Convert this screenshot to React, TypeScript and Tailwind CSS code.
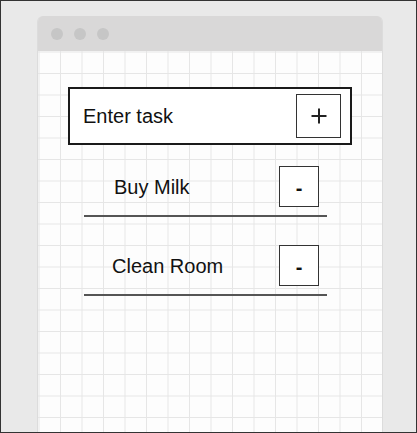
import React from "react";

const font = { fontFamily: '"Liberation Sans", Arial, sans-serif' };

function MinusButton() {
  return (
    <div className="w-[40px] h-[41px] border-[1.5px] border-[#333] bg-white flex items-center justify-center text-[20px] leading-none text-[#111]">
      <span className="mt-[2px] font-bold">-</span>
    </div>
  );
}

function TaskItem({ label, indent }: { label: string; indent: string }) {
  return (
    <div className="flex items-center justify-between pb-[8px] border-b-2 border-[#555] pr-[8px]">
      <span className={`text-[20px] leading-none text-[#111] ${indent}`}>{label}</span>
      <MinusButton />
    </div>
  );
}

export default function App() {
  return (
    <div
      className="w-[417px] h-[433px] bg-[#e9e9e9] border border-[#333] overflow-hidden pl-[36px] pt-[15px]"
      style={font}
    >
      <div className="w-[346px] h-full flex flex-col rounded-t-[6px] overflow-hidden border-x border-[#dcdcdc]">
        <div className="h-[35px] shrink-0 bg-[#d9d8d8] flex items-center pl-[13px] gap-[11px]">
          <div className="w-[12px] h-[12px] rounded-full bg-[#c6c6c6]" />
          <div className="w-[12px] h-[12px] rounded-full bg-[#c6c6c6]" />
          <div className="w-[12px] h-[12px] rounded-full bg-[#c6c6c6]" />
        </div>
        <div className="flex-1 bg-[#fdfdfd] bg-[linear-gradient(to_right,#e6e6e6_1px,transparent_1px),linear-gradient(to_bottom,#e6e6e6_1px,transparent_1px)] bg-[size:21.5px_21.5px] bg-[position:22px_22px]">
          <div className="ml-[30px] mt-[36px] w-[284px] h-[58px] border-2 border-[#1a1a1a] bg-white flex items-center justify-between pl-[13px] pr-[9px]">
            <span className="text-[20px] leading-none text-[#111]">Enter task</span>
            <div className="w-[45px] h-[44px] border-[1.5px] border-[#333] bg-white flex items-center justify-center">
              <svg width="16" height="16" viewBox="0 0 16 16">
                <path d="M8 0.5V15.5M0.5 8H15.5" stroke="#222" strokeWidth="2" fill="none" />
              </svg>
            </div>
          </div>
          <div className="ml-[46px] mt-[21px] w-[243px] flex flex-col gap-[28px]">
            <TaskItem label="Buy Milk" indent="pl-[30px]" />
            <TaskItem label="Clean Room" indent="pl-[28px]" />
          </div>
        </div>
      </div>
    </div>
  );
}
